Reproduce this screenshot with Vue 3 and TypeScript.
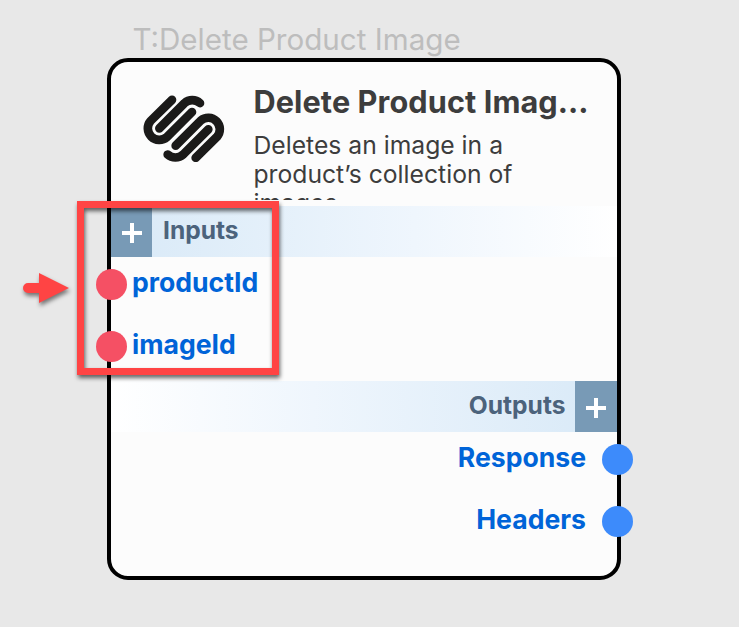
<script setup lang="ts">
interface Port {
  name: string
}

const inputs: Port[] = [{ name: 'productId' }, { name: 'imageId' }]
const outputs: Port[] = [{ name: 'Response' }, { name: 'Headers' }]
</script>

<template>
  <main class="canvas">
    <div class="caption">T:Delete Product Image</div>
    <section class="node">
      <header class="head">
        <svg class="logo" viewBox="36 30 252 202" fill="none" stroke="#1b1a19" stroke-width="26" stroke-linecap="round" stroke-linejoin="round">
          <path d="M126 44.5 L61.5 108 A34.6 34.6 0 0 0 110.5 156.5 L186 81" />
          <path d="M88 130 L163.5 54.5 A34.6 34.6 0 0 1 210 54.5" />
          <path d="M197 218.5 L261.5 155 A34.6 34.6 0 0 0 212.5 106.5 L137 182" />
          <path d="M235 133 L159.5 208.5 A34.6 34.6 0 0 1 113 208.5" />
        </svg>
        <div class="info">
          <h1 class="title">Delete Product Imag…</h1>
          <p class="description">Deletes an image in a product’s collection of images.</p>
        </div>
      </header>

      <div class="bar bar-in">
        <button class="add" aria-label="Add input">
          <svg viewBox="0 0 20 20"><path d="M0 10H20M10 0V20" /></svg>
        </button>
        <span class="bar-label">Inputs</span>
      </div>
      <ul class="ports ports-in">
        <li v-for="port in inputs" :key="port.name" class="port">
          <i class="dot"></i><span class="port-name">{{ port.name }}</span>
        </li>
      </ul>

      <div class="bar bar-out">
        <span class="bar-label">Outputs</span>
        <button class="add" aria-label="Add output">
          <svg viewBox="0 0 20 20"><path d="M0 10H20M10 0V20" /></svg>
        </button>
      </div>
      <ul class="ports ports-out">
        <li v-for="port in outputs" :key="port.name" class="port">
          <span class="port-name">{{ port.name }}</span><i class="dot"></i>
        </li>
      </ul>
    </section>

    <div class="highlight"></div>
    <svg class="arrow" viewBox="0 0 46 30">
      <path d="M5 10H16V0L46 15L16 30V20H5A5 5 0 0 1 5 10Z" fill="#ff4444" />
    </svg>
  </main>
</template>

<style>
body {
  margin: 0;
  background: #e8e8e8;
}
</style>

<style scoped>
.canvas {
  position: relative;
  box-sizing: border-box;
  width: 739px;
  height: 627px;
  padding: 22px 0 0 106.5px;
  overflow: hidden;
  background: #e8e8e8;
  font-family: Inter, "Liberation Sans", sans-serif;
}
.caption {
  height: 36px;
  padding-left: 26px;
  color: #bdbdbd;
  font-size: 29.6px;
  line-height: 34px;
  white-space: nowrap;
}
.node {
  box-sizing: border-box;
  width: 514px;
  height: 522px;
  border: 4px solid #000;
  border-radius: 21px;
  background: #fcfcfc;
}
.head {
  display: flex;
  height: 143.5px;
}
.logo {
  flex: none;
  width: 84px;
  height: 67.3px;
  margin: 33px 27.5px 0 31.5px;
}
.info {
  box-sizing: border-box;
  width: 345px;
  height: 138px;
  padding-top: 22px;
  overflow: hidden;
}
.title {
  margin: 0;
  color: #3d3d3d;
  font-size: 30.7px;
  font-weight: 700;
  letter-spacing: 0.08px;
  line-height: 36px;
  white-space: nowrap;
}
.description {
  width: 290px;
  margin: 11px 0 0;
  color: #3d3d3d;
  font-size: 24.7px;
  line-height: 29px;
}
.bar {
  display: flex;
  height: 51.5px;
}
.bar-in {
  background: linear-gradient(90deg, #d8e9f7, #eff6fd 60%, #fff);
}
.bar-out {
  justify-content: flex-end;
  background: linear-gradient(270deg, #d8e9f7, #eff6fd 60%, #fff);
}
.bar-label {
  padding: 0 11px;
  color: #4c637c;
  font-size: 24.6px;
  font-weight: 700;
  line-height: 49px;
}
.bar-out .bar-label {
  padding-right: 9.5px;
}
.add {
  display: flex;
  align-items: center;
  justify-content: center;
  width: 41.5px;
  padding: 3px 0 0 1px;
  border: 0;
  background: #789ab6;
}
.add svg {
  width: 20px;
  height: 20px;
  fill: none;
  stroke: #fff;
  stroke-width: 4;
}
.ports {
  display: grid;
  grid-auto-rows: 31px;
  align-content: start;
  gap: 30.8px;
  height: 111.6px;
  margin: 0;
  padding: 12px 0 0;
  list-style: none;
}
.ports-in {
  margin-left: -14.5px;
}
.ports-out {
  margin-right: -16.5px;
}
.port {
  display: flex;
  align-items: center;
}
.ports-out .port {
  justify-content: flex-end;
  gap: 16px;
}
.ports-in .port {
  gap: 5px;
}
.dot {
  width: 31px;
  height: 31px;
  border-radius: 50%;
  background: #f55064;
}
.ports-out .dot {
  background: #3d8bfb;
}
.port-name {
  height: 31px;
  color: #0064d8;
  font-size: 26.6px;
  font-weight: 700;
  line-height: 27px;
}
.highlight {
  position: absolute;
  top: 201px;
  left: 77px;
  box-sizing: border-box;
  width: 202px;
  height: 174px;
  border: 7px solid #ff4444;
  filter: drop-shadow(1px 3px 2px rgba(0, 0, 0, 0.6));
}
.arrow {
  position: absolute;
  top: 273px;
  left: 23px;
  width: 46px;
  height: 30px;
  overflow: visible;
  filter: drop-shadow(1px 3px 2px rgba(0, 0, 0, 0.5));
}
</style>
